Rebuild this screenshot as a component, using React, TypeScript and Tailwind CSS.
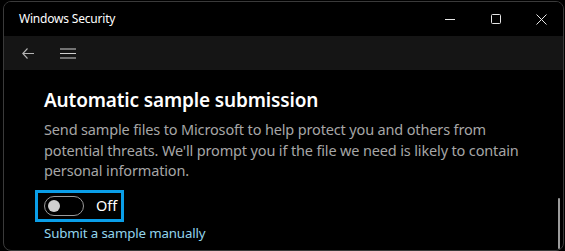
import React from 'react';

const font = { fontFamily: '"Noto Sans", "Open Sans", sans-serif' };

function TitleBar() {
  return (
    <div className="h-[34px] flex items-center bg-black">
      <span className="ml-[15px] text-[12px] text-white tracking-[-0.2px]">Windows Security</span>
      <div className="ml-auto flex h-full">
        {/* minimize */}
        <div className="w-[46px] h-full flex items-center justify-center">
          <svg width="10" height="10" viewBox="0 0 10 10">
            <line x1="0" y1="5.5" x2="10" y2="5.5" stroke="#e6e6e6" strokeWidth="1" />
          </svg>
        </div>
        {/* maximize */}
        <div className="w-[46px] h-full flex items-center justify-center">
          <svg width="10" height="10" viewBox="0 0 10 10">
            <rect x="0.5" y="0.5" width="9" height="9" rx="1" fill="none" stroke="#e6e6e6" strokeWidth="1" />
          </svg>
        </div>
        {/* close */}
        <div className="w-[44px] h-full flex items-center justify-center">
          <svg width="11" height="11" viewBox="0 0 11 11">
            <path d="M0.5 0.5 L10.5 10.5 M10.5 0.5 L0.5 10.5" stroke="#e6e6e6" strokeWidth="1" />
          </svg>
        </div>
      </div>
    </div>
  );
}

function NavBar() {
  return (
    <div className="h-[34px] flex items-center bg-[#151515]">
      <svg className="ml-[18px]" width="12" height="11" viewBox="0 0 12 11">
        <path d="M5.5 0.5 L0.8 5.5 L5.5 10.5 M0.8 5.5 L12 5.5" fill="none" stroke="#b4b4b4" strokeWidth="1.1" />
      </svg>
      <svg className="ml-[26px]" width="16" height="11" viewBox="0 0 16 11">
        <path d="M0 1 H16 M0 5.5 H16 M0 10 H16" stroke="#d0d0d0" strokeWidth="1.2" />
      </svg>
    </div>
  );
}

export default function App() {
  return (
    <div className="w-[565px] h-[251px] bg-black overflow-hidden" style={font}>
      <div className="relative ml-[3px] mt-[1px] w-[561px] h-[250px] border border-[#3a3a3a] rounded-[8px] overflow-hidden bg-black">
        <TitleBar />
        <NavBar />

        <div className="pl-[40px] pt-[18px]">
          <h1 className="text-[19px] font-semibold text-white leading-[24px] tracking-[-0.15px]">
            Automatic sample submission
          </h1>
          <p className="mt-[7px] text-[14.5px] text-[#a6a6a6] leading-[20.5px] tracking-[-0.15px]">
            Send sample files to Microsoft to help protect you and others from
            <br />
            potential threats. We'll prompt you if the file we need is likely to contain
            <br />
            personal information.
          </p>

          {/* focused toggle */}
          <div className="mt-[9px] ml-[-9px] w-[89px] h-[32px] border-[3px] border-[#0a9ee8] flex items-center pl-[6px]">
            <div className="w-[40px] h-[20px] rounded-full border border-[#9a9a9a] flex items-center pl-[3px]">
              <div className="w-[12px] h-[12px] rounded-full bg-[#cfcfcf]" />
            </div>
            <span className="ml-[12px] text-[14.5px] text-white leading-none">Off</span>
          </div>

          <a href="#" className="block mt-[1px] text-[13.3px] text-[#92d4ec] leading-[20px] tracking-[-0.15px]">
            Submit a sample manually
          </a>
        </div>

        {/* scrollbar */}
        <div className="absolute right-[3px] top-[196px] w-[2px] h-[51px] rounded-full bg-[#9c9c9c]" />
      </div>
    </div>
  );
}
